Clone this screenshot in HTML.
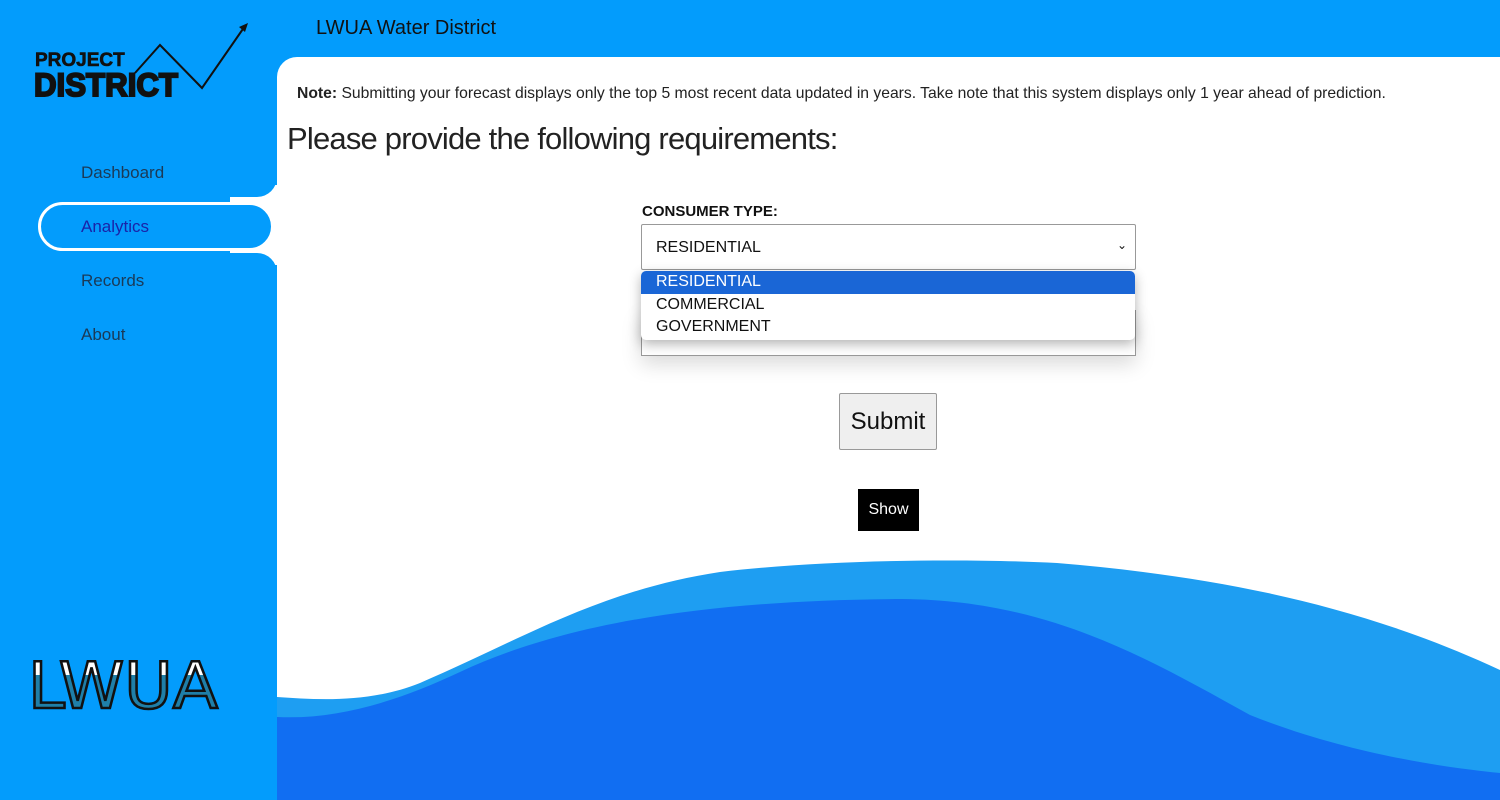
<!DOCTYPE html>
<html><head><meta charset="utf-8"><style>
*{margin:0;padding:0;box-sizing:border-box}
body{width:1500px;height:800px;overflow:hidden;background:#039cfc;font-family:"Liberation Sans",Arial,sans-serif;position:relative}
.main{position:absolute;left:277px;top:57px;width:1223px;height:743px;background:#fff;border-top-left-radius:20px;overflow:hidden}
.title{position:absolute;left:316px;top:17px;font-size:20px;color:#111}
.blk1{position:absolute;left:0;top:0;width:277px;height:197px;background:#039cfc;border-bottom-right-radius:20px}
.blk2{position:absolute;left:0;top:253px;width:277px;height:547px;background:#039cfc;border-top-right-radius:20px}
.blk3{position:absolute;left:0;top:190px;width:230px;height:70px;background:#039cfc}
.gap{position:absolute;left:220px;top:185px;width:57px;height:80px;background:#fff}
.nav{position:absolute;left:81px;font-size:17px;color:#1b3a57}
.pill{position:absolute;left:38px;top:202px;width:236px;height:49px;border:3px solid #fff;border-radius:25px;background:#039cfc}
.note{position:absolute;left:297px;top:85px;font-size:15.7px;color:#222}
h1{position:absolute;left:287px;top:121px;font-size:31px;font-weight:normal;color:#222;font-family:"Liberation Sans",sans-serif;letter-spacing:-0.8px}
.lbl{position:absolute;left:642px;top:203px;font-size:15px;font-weight:bold;color:#111}
.sel{position:absolute;left:641px;top:224px;width:495px;height:46px;border:1px solid #999;border-radius:2px;background:#fff;font-size:16px;padding:14px 0 0 14px;color:#111}
.sel2{position:absolute;left:641px;top:310px;width:495px;height:46px;border:1px solid #999;background:#fff;box-shadow:0 8px 20px rgba(0,0,0,.15)}
.dd{position:absolute;left:641px;top:271px;width:494px;height:69px;background:#fff;border-radius:5px;box-shadow:0 4px 12px rgba(0,0,0,.3);font-size:16px;color:#111;overflow:hidden}
.dd div{height:22.7px;padding-left:15px;line-height:22px}
.dd .on{background:#1a66d6;color:#fff}
.sub{position:absolute;left:839px;top:393px;width:98px;height:57px;background:#efefef;border:1px solid #999;border-radius:2px;font-size:24px;text-align:center;line-height:55px;color:#111}
.show{position:absolute;left:858px;top:489px;width:61px;height:42px;background:#000;color:#fff;font-size:16px;text-align:center;line-height:42px}
</style></head><body>
<div class="main"></div>
<div class="gap"></div>
<div class="blk3"></div>
<div class="blk1"></div>
<div class="blk2"></div>
<div class="pill"></div>
<svg style="position:absolute;left:277px;top:540px" width="1223" height="260" viewBox="277 540 1223 260">
<path d="M277 697 C320 700 370 703 420 683 C520 640 600 590 720 572 C820 560 960 558 1057 563 C1200 575 1350 600 1500 670 L1500 800 L277 800Z" fill="#1e9ef2"/>
<path d="M277 717 C340 720 400 700 460 672 C560 625 700 600 902 599 C1050 600 1150 660 1250 715 C1350 755 1450 768 1500 773 L1500 800 L277 800Z" fill="#116ef2"/>
</svg>
<div class="title">LWUA Water District</div>
<svg style="position:absolute;left:30px;top:20px" width="230" height="85">
<text x="5" y="46" font-family="Liberation Sans" font-weight="bold" font-size="19" fill="#111" stroke="#111" stroke-width="0.6">PROJECT</text>
<text x="4" y="76" font-family="Liberation Sans" font-weight="bold" font-size="32" fill="#111" stroke="#111" stroke-width="2" textLength="144" lengthAdjust="spacingAndGlyphs">DISTRICT</text>
<path d="M105 53 L130 25 L172 68 L215 6" stroke="#111" stroke-width="2" fill="none"/>
<path d="M218 3 L209 7 L215 12Z" fill="#111"/>
</svg>
<div class="nav" style="top:163px">Dashboard</div>
<div class="nav" style="top:217px;color:#1a23a8">Analytics</div>
<div class="nav" style="top:271px">Records</div>
<div class="nav" style="top:325px">About</div>
<svg style="position:absolute;left:20px;top:645px" width="210" height="75">
<defs><clipPath id="c"><rect x="0" y="30" width="210" height="45"/></clipPath><clipPath id="t"><rect x="0" y="0" width="210" height="30"/></clipPath></defs>
<text x="8" y="63" font-family="DejaVu Sans" font-size="64" fill="#fff" stroke="#111" stroke-width="2.5" textLength="190" lengthAdjust="spacingAndGlyphs" clip-path="url(#t)">LWUA</text>
<text x="8" y="63" font-family="DejaVu Sans" font-size="64" fill="#1f7fa8" stroke="#111" stroke-width="2.5" textLength="190" lengthAdjust="spacingAndGlyphs" clip-path="url(#c)">LWUA</text>
</svg>
<div class="note"><b>Note:</b> Submitting your forecast displays only the top 5 most recent data updated in years. Take note that this system displays only 1 year ahead of prediction.</div>
<h1>Please provide the following requirements:</h1>
<div class="lbl">CONSUMER TYPE:</div>
<div class="sel">RESIDENTIAL<span style="position:absolute;right:8px;top:13px;font-size:12px">&#8964;</span></div>
<div class="sel2"></div>
<div class="dd"><div class="on">RESIDENTIAL</div><div>COMMERCIAL</div><div>GOVERNMENT</div></div>
<div class="sub">Submit</div>
<div class="show">Show</div>
</body></html>
